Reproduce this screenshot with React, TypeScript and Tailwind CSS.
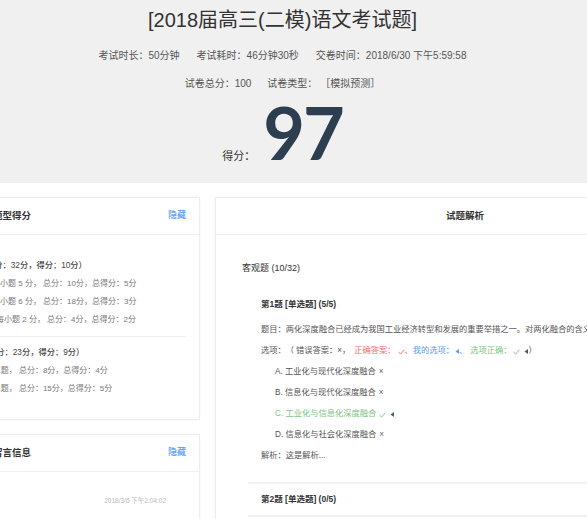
import React from "react";

function Check({ className = "" }: { className?: string }) {
  return (
    <svg width="7" height="6" viewBox="0 0 7 6" className={className}>
      <path d="M0.6 3.1 L2.6 5 L6.4 0.8" stroke="currentColor" fill="none" strokeWidth="1" />
    </svg>
  );
}

function Tri({ className = "" }: { className?: string }) {
  return (
    <svg width="4" height="5" viewBox="0 0 4 5" className={className}>
      <path d="M4 0 L0.5 2.5 L4 5 Z" fill="currentColor" />
    </svg>
  );
}

function Row({ children, className = "" }: { children: React.ReactNode; className?: string }) {
  return <div className={`h-[21px] flex items-center whitespace-nowrap ${className}`}>{children}</div>;
}

export default function App() {
  return (
    <div className="w-[587px] h-[519px] overflow-hidden bg-white font-['Liberation_Sans','Noto_Sans_CJK_SC',sans-serif] text-[#333]">
      {/* header */}
      <div className="bg-[#f0f0f0] h-[183px] flex flex-col items-center pr-[22px]">
        <h1 className="mt-[7px] text-[20px] leading-[26px] text-[#333] whitespace-nowrap">[2018届高三(二模)语文考试题]</h1>
        <div className="mt-[16px] flex gap-[17px] text-[10px] leading-[14px] text-[#555] whitespace-nowrap">
          <span>考试时长：50分钟</span>
          <span>考试耗时：46分钟30秒</span>
          <span>交卷时间：2018/6/30 下午5:59:58</span>
        </div>
        <div className="mt-[14px] flex gap-[16px] text-[10px] leading-[14px] text-[#555] whitespace-nowrap">
          <span>试卷总分：100</span>
          <span className="flex">
            <span>试卷类型：</span>
            <span className="ml-[3px]">［模拟预测］</span>
          </span>
        </div>
        <div className="mt-[5px] flex items-baseline gap-[8px]">
          <span className="text-[11px] text-[#333]">得分：</span>
          <span className="font-['Lato',sans-serif] font-bold text-[72px] leading-none tracking-[-2px] text-[#2c3e50]">97</span>
        </div>
      </div>

      {/* columns */}
      <div className="flex items-start gap-[15px] -ml-[22px] mt-[14px]">
        {/* left column */}
        <div className="w-[222px] shrink-0 flex flex-col gap-[14px]">
          <div className="border border-[#ededed] bg-white shadow-[0_0_3px_rgba(0,0,0,0.03)]">
            <div className="h-[37px] border-b border-[#f0f0f0] flex items-center justify-between pl-[14px] pr-[13px]">
              <span className="text-[9.5px] font-semibold text-[#333] whitespace-nowrap">题型得分</span>
              <span className="text-[9px] font-medium text-[#5b9cf0]">隐藏</span>
            </div>
            <div className="pl-[14px] pr-[13px] pt-[22px] pb-[21px]">
              <div className="-ml-[40px] h-[18px] leading-[18px] text-[8.25px] font-medium text-[#444] whitespace-nowrap">客观题（总分：32分，得分：10分）</div>
              <div className="-ml-[33px] h-[18px] leading-[18px] text-[8px] text-[#777] whitespace-nowrap">单选题：每小题 5 分， 总分：10分，总得分：5分</div>
              <div className="-ml-[33px] h-[18px] leading-[18px] text-[8px] text-[#777] whitespace-nowrap">多选题：每小题 6 分， 总分：18分，总得分：3分</div>
              <div className="-ml-[29px] h-[18px] leading-[18px] text-[8px] text-[#777] whitespace-nowrap">判断题：每小题 2 分， 总分：4分，总得分：2分</div>
              <div className="mt-[7px] h-px bg-[#eeeeee] -ml-[14px]" />
              <div className="mt-[7px] -ml-[38px] h-[18px] leading-[18px] text-[8.25px] font-medium text-[#444] whitespace-nowrap">主观题（总分：23分，得分：9分）</div>
              <div className="-ml-[31px] h-[18px] leading-[18px] text-[8px] text-[#777] whitespace-nowrap">简答题 共1题， 总分：8分，总得分：4分</div>
              <div className="-ml-[31px] h-[18px] leading-[18px] text-[8px] text-[#777] whitespace-nowrap">作文题 共1题， 总分：15分，总得分：5分</div>
            </div>
          </div>

          <div className="border border-[#ededed] bg-white shadow-[0_0_3px_rgba(0,0,0,0.03)]">
            <div className="h-[37px] border-b border-[#f0f0f0] flex items-center justify-between pl-[14px] pr-[13px]">
              <span className="text-[9.5px] font-semibold text-[#333] whitespace-nowrap">留言信息</span>
              <span className="text-[9px] font-medium text-[#5b9cf0]">隐藏</span>
            </div>
            <div className="pt-[23px] pb-[30px] pr-[33px] flex justify-end">
              <span className="text-[6.5px] leading-[12px] text-[#bbb] whitespace-nowrap">2018/3/6 下午2:04:02</span>
            </div>
          </div>
        </div>

        {/* right card */}
        <div className="w-[500px] shrink-0 border border-[#ededed] bg-white shadow-[0_0_3px_rgba(0,0,0,0.03)]">
          <div className="h-[37px] border-b border-[#f0f0f0] flex items-center justify-center text-[9.5px] font-semibold text-[#333]">试题解析</div>
          <div className="pt-[23px] pl-[26px] pb-[20px]">
            <div className="h-[20px] leading-[20px] text-[9px] text-[#333] whitespace-nowrap">客观题 (10/32)</div>
            <div className="ml-[6px] mt-[11px]">
              <div className="border-b-2 border-[#f3f3f3] px-[13px] pb-[15px]">
                <div className="h-[31px] flex items-center text-[8.5px] font-semibold text-[#333] whitespace-nowrap">第1题 [单选题] (5/5)</div>
                <div className="text-[8.25px] text-[#555]">
                  <Row>题目：两化深度融合已经成为我国工业经济转型和发展的重要举措之一。对两化融合的含义理解正确的是（ ）</Row>
                  <Row>
                    <span>选项：</span>
                    <span>（</span>
                    <span className="ml-[2px]">错误答案：×，</span>
                    <span className="ml-[4px] text-[#f56c6c] flex items-center">正确答案：<Check className="ml-[2px]" />、</span>
                    <span className="text-[#5a9cf0] flex items-center">我的选项：<Tri className="ml-[1px]" />、</span>
                    <span className="ml-[3px] text-[#7cc47f] flex items-center">选项正确：<Check className="ml-[1px]" /><Tri className="ml-[4px] text-[#555]" /></span>
                    <span className="ml-[1px]">）</span>
                  </Row>
                  <Row className="pl-[14px]">A. 工业化与现代化深度融合 <span className="ml-[3px] text-[#666]">×</span></Row>
                  <Row className="pl-[14px]">B. 信息化与现代化深度融合 <span className="ml-[3px] text-[#666]">×</span></Row>
                  <Row className="pl-[14px] text-[#7cc47f]">C. 工业化与信息化深度融合 <Check className="ml-[3px]" /><Tri className="ml-[4px] text-[#3d6b3d]" /></Row>
                  <Row className="pl-[14px]">D. 信息化与社会化深度融合 <span className="ml-[3px] text-[#666]">×</span></Row>
                  <Row>解析：这是解析...</Row>
                </div>
              </div>
              <div className="border-b-2 border-[#f3f3f3] px-[13px]">
                <div className="h-[31px] flex items-center text-[8.5px] font-semibold text-[#333] whitespace-nowrap">第2题 [单选题] (0/5)</div>
              </div>
            </div>
          </div>
        </div>
      </div>
    </div>
  );
}
